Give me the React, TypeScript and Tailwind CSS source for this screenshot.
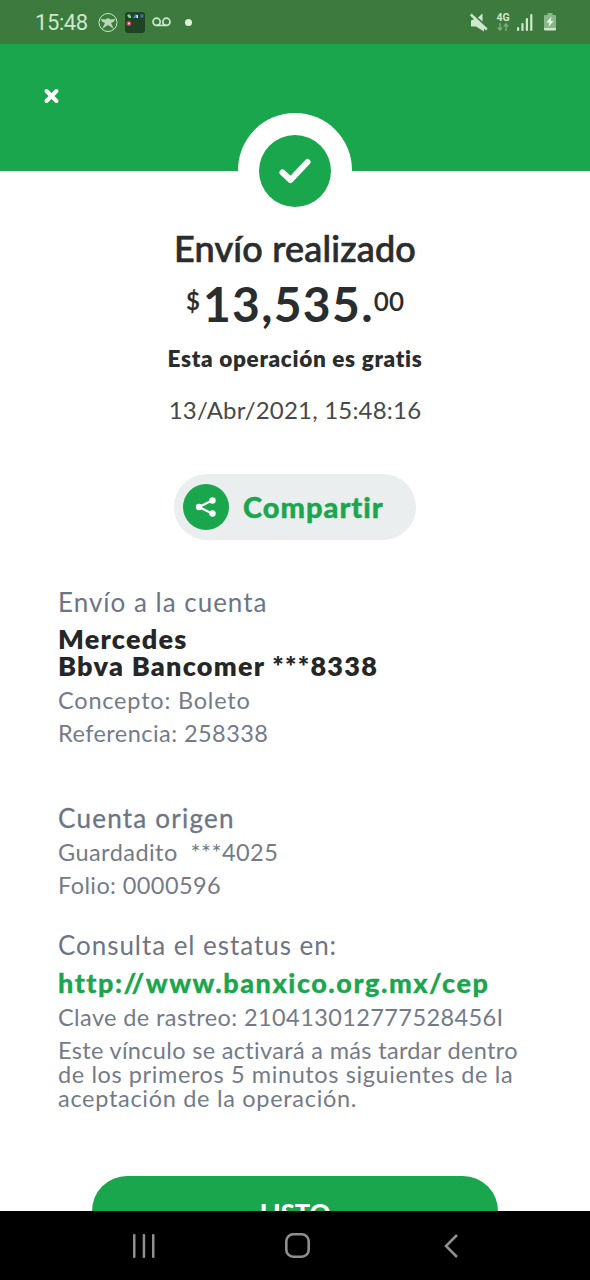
import type { ReactNode } from "react";

import clsx from "clsx";

type LineProps = {
  children: ReactNode;
  className?: string;
};

const StatusBar = () => (
  <div className="flex h-11 shrink-0 items-center justify-between bg-[#3c7a3e] pr-[34px] pl-[35px] text-[#cde8cb]">
    <div className="flex items-center">
      <span className="w-[54px] pt-[2px] font-[Roboto] text-[22px] leading-none tracking-[-0.4px]">
        15:48
      </span>
      <svg className="ml-[9px]" width="20" height="20" viewBox="0 0 20 20">
        <circle cx="10" cy="10.5" r="9" fill="none" stroke="currentColor" strokeWidth="1" />
        <path
          d="M2.5 7 L7.5 7.500 L10 6 L12.500 7.500 L17.5 7 L15.500 10 L13 11 L16 17 L10 13 L4 17 L7 11 L4.500 10 Z"
          fill="currentColor"
          opacity="0.85"
        />
      </svg>
      <svg className="ml-[7px]" width="20" height="21" viewBox="0 0 20 21">
        <rect width="20" height="21" rx="3" fill="#1f4424" />
        <path d="M2 3.500l2-1.500 2 2v2H4z" fill="#7fd39a" />
        <path d="M8 6l2-3.500h2V6z" fill="#3f7fe0" />
        <path d="M11.500 3h1.500v3h-1.500z" fill="#d8ecff" />
        <path d="M15 2.500h4l-1 3-1 .8-1-.8z" fill="#4468b0" />
        <circle cx="3.8" cy="11.500" r="2.500" fill="#d23a5b" />
        <circle cx="4" cy="11.500" r="1" fill="#fff" />
      </svg>
      <svg
        className="ml-[7px]"
        width="19"
        height="10"
        viewBox="0 0 19 10"
        fill="none"
        stroke="currentColor"
        strokeWidth="1.7"
      >
        <circle cx="4.600" cy="4.800" r="3.600" />
        <circle cx="14.400" cy="4.800" r="3.600" />
        <path d="M4.600 8.400h9.800" />
      </svg>
      <span className="ml-[14px] size-[7px] rounded-full bg-[#dcf2da]" />
    </div>
    <div className="flex items-center">
      <svg width="18" height="19" viewBox="0 0 18 19" fill="currentColor">
        <path d="M1 7.500L4.500 6L14 14.500V18.500L6 13.500H1z" />
        <path d="M8 4.500L12.500 0.500V8.500z" />
        <path d="M0.800 1.500L16.800 16.500" stroke="currentColor" strokeWidth="2.400" />
      </svg>
      <div className="ml-[8px] flex w-[14px] flex-col items-center">
        <span className="font-[Roboto] text-[10.5px] leading-[10px] font-bold">4G</span>
        <svg width="12" height="8" viewBox="0 0 12 8" fill="none" stroke="#7fae7d" strokeWidth="1.4">
          <path d="M3 0v6.500M0.800 4.500L3 7l2.200-2.500M9 8V1.200M6.800 3.500L9 1l2.200 2.500" />
        </svg>
      </div>
      <svg className="ml-[7px]" width="16" height="18" viewBox="0 0 16 18" fill="currentColor">
        <rect x="0" y="14" width="2.200" height="4" rx="1" />
        <rect x="4.400" y="10" width="2.200" height="8" rx="1" />
        <rect x="8.800" y="5" width="2.200" height="13" rx="1" />
        <rect x="13.200" y="1" width="2.200" height="17" rx="1" />
      </svg>
      <svg className="ml-[11px]" width="12" height="18" viewBox="0 0 12 18">
        <path d="M3.500 0h5v2H11a1 1 0 0 1 1 1V15H0V3a1 1 0 0 1 1-1h2.500z" fill="#8ab888" />
        <path d="M0 15h12v1.500a1 1 0 0 1-1 1H1a1 1 0 0 1-1-1z" fill="currentColor" />
        <path d="M7.500 3.500L2.500 9.500h3L4.500 14l5-6h-3z" fill="#eefbed" />
      </svg>
    </div>
  </div>
);

const Title = ({ children, className }: LineProps) => (
  <p className={clsx("text-[26px] leading-8", className)}>{children}</p>
);

const Detail = ({ children, className }: LineProps) => (
  <p className={clsx("text-[23.5px] leading-[33px] whitespace-pre text-[#737b89]", className)}>
    {children}
  </p>
);

const NavBar = () => (
  <div className="flex h-[69px] shrink-0 items-center bg-black text-[#8f8f8f]">
    <svg className="ml-[132px]" width="24" height="24" viewBox="0 0 24 24" fill="currentColor">
      <rect x="1" y="0" width="2.500" height="24" rx="1" />
      <rect x="10.700" y="0" width="2.500" height="24" rx="1" />
      <rect x="20" y="0" width="2.500" height="24" rx="1" />
    </svg>
    <svg className="ml-[128px]" width="27" height="27" viewBox="0 0 27 27" fill="none">
      <rect
        x="2.300"
        y="2.300"
        width="22.400"
        height="22.400"
        rx="7"
        stroke="currentColor"
        strokeWidth="2.600"
      />
    </svg>
    <svg className="ml-[132px]" width="17" height="26" viewBox="0 0 17 26" fill="none">
      <path d="M14 2L3 13L14 24" stroke="currentColor" strokeWidth="2.600" />
    </svg>
  </div>
);

const App = () => {
  return (
    <div className="flex h-[1280px] w-[590px] flex-col overflow-hidden bg-white font-[Lato,sans-serif] text-[#2a2d2d]">
      <StatusBar />

      <header className="relative h-[127px] shrink-0 bg-[#1aa64d]">
        <svg className="absolute top-[43px] left-[43px]" width="17" height="18" viewBox="0 0 17 18">
          <path
            d="M3.500 4L13.500 14M13.500 4L3.500 14"
            stroke="white"
            strokeWidth="4"
            strokeLinecap="round"
          />
        </svg>
        <div className="absolute top-[69px] left-[238px] flex size-[114px] items-center justify-center rounded-full bg-white">
          <div className="mt-px flex size-[72px] items-center justify-center rounded-full bg-[#1aa64d]">
            <svg width="34" height="28" viewBox="0 0 34 28" fill="none">
              <path
                d="M4.500 15.500L12.500 23L29.500 5"
                stroke="white"
                strokeWidth="6"
                strokeLinecap="round"
                strokeLinejoin="round"
              />
            </svg>
          </div>
        </div>
      </header>

      <main className="flex min-h-0 flex-1 flex-col overflow-hidden">
        <section className="flex flex-col items-center pt-[56px] whitespace-nowrap">
          <h1 className="text-[36px] leading-[42px] font-medium tracking-[0.2px] [-webkit-text-stroke:0.7px]">
            Envío realizado
          </h1>
          <div className="mt-[10px] flex h-[50px] items-start leading-none font-bold">
            <span className="mt-[10px] text-[24px] font-semibold [-webkit-text-stroke:0.3px]">$</span>
            <span className="ml-[3px] text-[48px] leading-[50px] tracking-[1.3px]">13,535.</span>
            <span className="mt-[9px] text-[26px] font-semibold">00</span>
          </div>
          <p className="mt-[15px] text-[22.5px] leading-[30px] font-extrabold tracking-[0.68px]">
            Esta operación es gratis
          </p>
          <p className="mt-[20px] text-[24px] leading-8 tracking-[0.2px] text-[#464949]">
            13/Abr/2021, 15:48:16
          </p>
          <button className="mt-[48px] flex h-[66px] w-[242px] items-center rounded-full bg-[#eaeeef] pl-[9px] text-[#1aa64d]">
            <span className="flex size-[46px] items-center justify-center rounded-full bg-[#1aa64d]">
              <svg width="22" height="22" viewBox="0 0 22 22" fill="white">
                <path d="M17 4.500L4 11L17 17.500" fill="none" stroke="white" strokeWidth="2.200" />
                <circle cx="4" cy="11" r="3.200" />
                <circle cx="17.500" cy="4.500" r="3.200" />
                <circle cx="17.500" cy="17.500" r="3.200" />
              </svg>
            </span>
            <span className="ml-[14px] text-[29px] leading-8 font-black tracking-[1px] [-webkit-text-stroke:0.4px]">
              Compartir
            </span>
          </button>
        </section>

        <section className="mt-[46px] px-[58px] whitespace-nowrap text-[#6c7585]">
          <Title className="tracking-[1px]">Envío a la cuenta</Title>
          <div className="mt-[7px] text-[27px] leading-[27px] font-extrabold tracking-[1.25px] text-[#252727]">
            <p>Mercedes</p>
            <p>Bbva Bancomer ***8338</p>
          </div>
          <Detail className="mt-[5px] tracking-[0.8px]">Concepto: Boleto</Detail>
          <Detail className="tracking-[0.45px]">Referencia: 258338</Detail>
        </section>

        <section className="mt-[52px] px-[58px] whitespace-nowrap text-[#6c7585]">
          <Title className="tracking-[1.25px] [-webkit-text-stroke:0.3px]">Cuenta origen</Title>
          <Detail className="mt-[2px] tracking-[0.45px]">{"Guardadito  ***4025"}</Detail>
          <Detail className="tracking-[0.4px]">Folio: 0000596</Detail>
        </section>

        <section className="mt-[27px] px-[58px] whitespace-nowrap text-[#6c7585]">
          <Title className="tracking-[0.95px]">Consulta el estatus en:</Title>
          <p className="mt-[8px] text-[27px] leading-[27px] font-black tracking-[1.53px] text-[#1aa64d] [-webkit-text-stroke:0.3px]">
            http://www.banxico.org.mx/cep
          </p>
          <Detail className="mt-[5px] tracking-[0.4px]">
            Clave de rastreo: 210413012777528456I
          </Detail>
          <div className="mt-[4px] text-[23.5px] leading-6 text-[#737b89]">
            <p className="tracking-[0.33px]">Este vínculo se activará a más tardar dentro</p>
            <p className="tracking-[0.6px]">de los primeros 5 minutos siguientes de la</p>
            <p className="tracking-[0.7px]">aceptación de la operación.</p>
          </div>
        </section>

        <button className="mt-[66px] ml-[92px] flex h-[70px] w-[406px] shrink-0 justify-center rounded-full bg-[#1aa64d] pt-[20px] text-[25.5px] leading-8 font-black text-white">
          LISTO
        </button>
      </main>

      <NavBar />
    </div>
  );
};

export default App;
